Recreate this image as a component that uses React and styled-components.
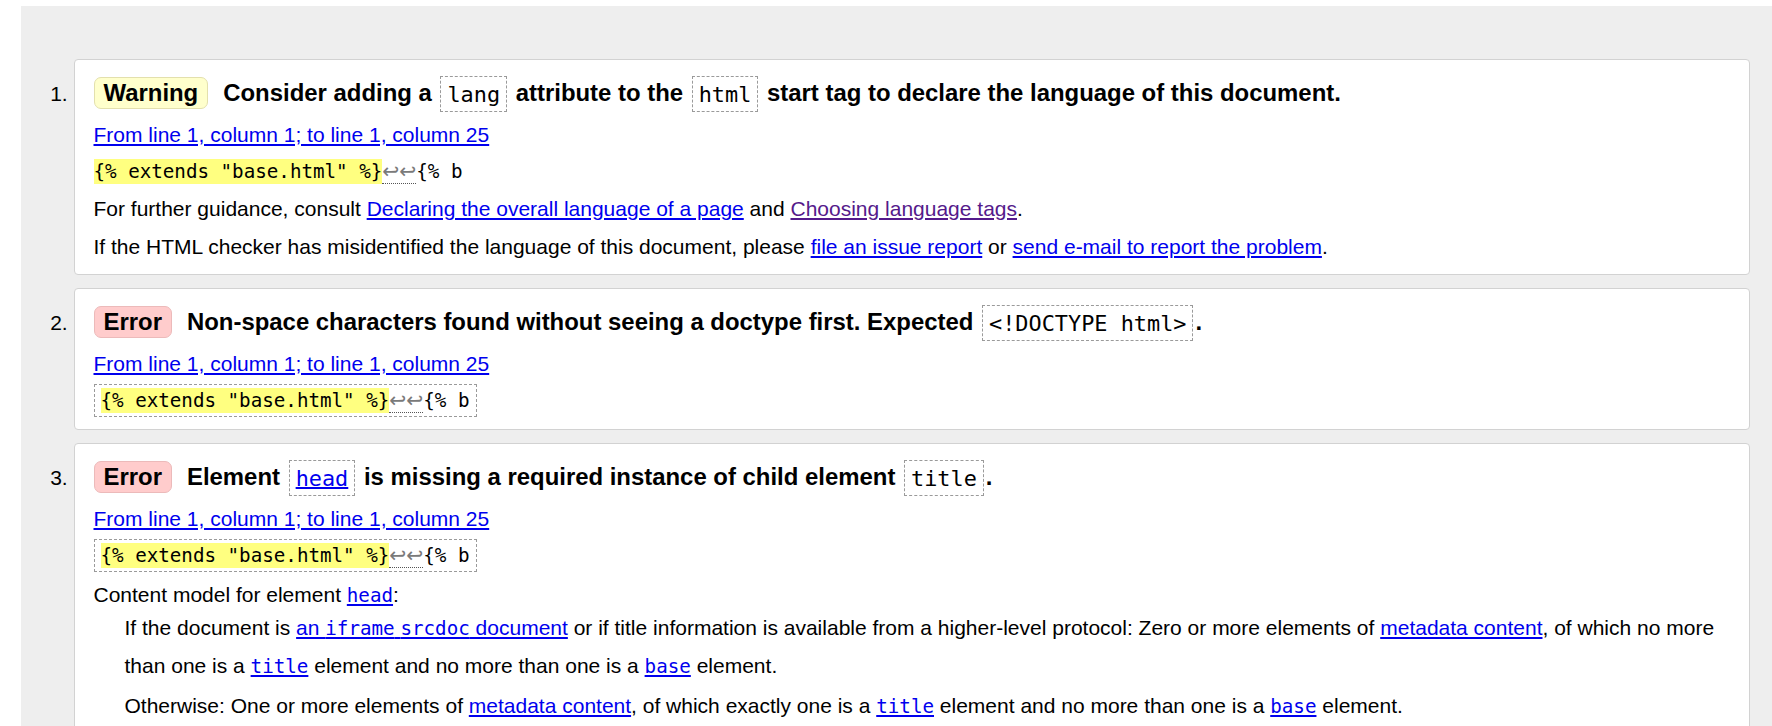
import React from 'react';
import styled, { createGlobalStyle, css } from 'styled-components';

const GlobalStyle = createGlobalStyle`
  html, body { margin: 0; padding: 0; background: #ffffff; }
  body {
    font-family: "Liberation Sans", Arial, sans-serif;
    color: #000;
  }
`;

const Page = styled.div`
  padding: 6px 0 0 21px;
`;

const Panel = styled.main`
  background: #eeeeee;
  min-height: calc(100vh - 6px);
  box-sizing: border-box;
  padding: 53px 22px 40px 52.5px;
`;

const MessageList = styled.ol`
  margin: 0;
  padding: 0;
  list-style: decimal outside;
`;

const Card = styled.li`
  background: #ffffff;
  border: 1px solid #d2d2d2;
  border-radius: 4px;
  padding: 7px 19px 8px;
  margin-bottom: 13px;
  font-size: 21px;
  line-height: 38px;
  color: #000;
`;

const Heading = styled.p`
  margin: 0;
  font-size: 23.92px;
  font-weight: bold;
  line-height: 51px;
`;

const Badge = styled.strong`
  display: inline-block;
  padding: 0 9px;
  margin-right: 15px;
  border-radius: 7px;
  line-height: 30px;
  font-weight: bold;
  border: 1px solid ${(p) => (p.$kind === 'warning' ? '#e3e0ad' : '#ecbaba')};
  background: ${(p) => (p.$kind === 'warning' ? '#ffffcc' : '#ffcccc')};
`;

const Token = styled.code`
  font-family: "DejaVu Sans Mono", "Liberation Mono", monospace;
  font-size: 21.86px;
  font-weight: normal;
  line-height: 1;
  padding: 4.5px 6px;
  margin: 0 2px;
  border: 1px dashed #9a9a9a;
`;

const Para = styled.p`
  margin: 0;
`;

const LocationLine = styled.p`
  margin: 0;
  line-height: 34px;
`;

const Link = styled.a`
  color: ${(p) => (p.$visited ? '#551a8b' : '#0000ee')};
  text-decoration: underline;
  cursor: pointer;
`;

const InlineCode = styled.code`
  font-family: "DejaVu Sans Mono", "Liberation Mono", monospace;
  font-size: 19.2px;
  line-height: 1;
`;

const ExtractLine = styled.p`
  margin: 0;
  padding-bottom: ${(p) => (p.$boxed ? '2px' : '0')};
`;

const ExtractCode = styled.code`
  font-family: "DejaVu Sans Mono", "Liberation Mono", monospace;
  font-size: 19.2px;
  line-height: 1;
  ${(p) =>
    p.$boxed &&
    css`
      padding: 4px 6px;
      border: 1px dashed #9a9a9a;
    `}
`;

const Highlight = styled.b`
  font-weight: normal;
  background: #ffff80;
  padding: 0.7px 0;
`;

const LineBreaks = styled.span`
  font-family: "DejaVu Sans", sans-serif;
  font-size: 20.3px;
  line-height: 1;
  color: #7a7a7a;
  border-bottom: 1px dotted #555;
`;

const ModelList = styled.dl`
  margin: 5px 0 0;
`;

const ModelTerm = styled.dt`
  line-height: 28px;
`;

const ModelDesc = styled.dd`
  margin: 0 0 0 31px;
`;

const ModelPara = styled.p`
  margin: 0 0 2px;
`;

function Extract({ boxed }) {
  return (
    <ExtractLine $boxed={boxed}>
      <ExtractCode $boxed={boxed}>
        <Highlight>{'{% extends "base.html" %}'}</Highlight>
        <LineBreaks>↩↩</LineBreaks>
        {'{% b'}
      </ExtractCode>
    </ExtractLine>
  );
}

function Location() {
  return (
    <LocationLine>
      <Link>From line 1, column 1; to line 1, column 25</Link>
    </LocationLine>
  );
}

export default function App() {
  return (
    <>
      <GlobalStyle />
      <Page>
        <Panel>
          <MessageList>
            <Card>
              <Heading>
                <Badge $kind="warning">Warning</Badge>
                Consider adding a <Token>lang</Token> attribute to the <Token>html</Token> start tag to
                declare the language of this document.
              </Heading>
              <Location />
              <Extract />
              <Para>
                For further guidance, consult <Link>Declaring the overall language of a page</Link> and{' '}
                <Link $visited>Choosing language tags</Link>.
              </Para>
              <Para>
                If the HTML checker has misidentified the language of this document, please{' '}
                <Link>file an issue report</Link> or <Link>send e-mail to report the problem</Link>.
              </Para>
            </Card>
            <Card>
              <Heading>
                <Badge $kind="error">Error</Badge>
                Non-space characters found without seeing a doctype first. Expected{' '}
                <Token>{'<!DOCTYPE html>'}</Token>.
              </Heading>
              <Location />
              <Extract boxed />
            </Card>
            <Card>
              <Heading>
                <Badge $kind="error">Error</Badge>
                Element{' '}
                <Token>
                  <Link>head</Link>
                </Token>{' '}
                is missing a required instance of child element <Token>title</Token>.
              </Heading>
              <Location />
              <Extract boxed />
              <ModelList>
                <ModelTerm>
                  Content model for element{' '}
                  <Link>
                    <InlineCode>head</InlineCode>
                  </Link>
                  :
                </ModelTerm>
                <ModelDesc>
                  <ModelPara>
                    If the document is{' '}
                    <Link>
                      an <InlineCode>iframe</InlineCode> <InlineCode>srcdoc</InlineCode> document
                    </Link>{' '}
                    or if title information is available from a higher-level protocol: Zero or more
                    elements of <Link>metadata content</Link>, of which no more than one is a{' '}
                    <Link>
                      <InlineCode>title</InlineCode>
                    </Link>{' '}
                    element and no more than one is a{' '}
                    <Link>
                      <InlineCode>base</InlineCode>
                    </Link>{' '}
                    element.
                  </ModelPara>
                  <ModelPara>
                    Otherwise: One or more elements of <Link>metadata content</Link>, of which exactly
                    one is a{' '}
                    <Link>
                      <InlineCode>title</InlineCode>
                    </Link>{' '}
                    element and no more than one is a{' '}
                    <Link>
                      <InlineCode>base</InlineCode>
                    </Link>{' '}
                    element.
                  </ModelPara>
                </ModelDesc>
              </ModelList>
            </Card>
          </MessageList>
        </Panel>
      </Page>
    </>
  );
}
